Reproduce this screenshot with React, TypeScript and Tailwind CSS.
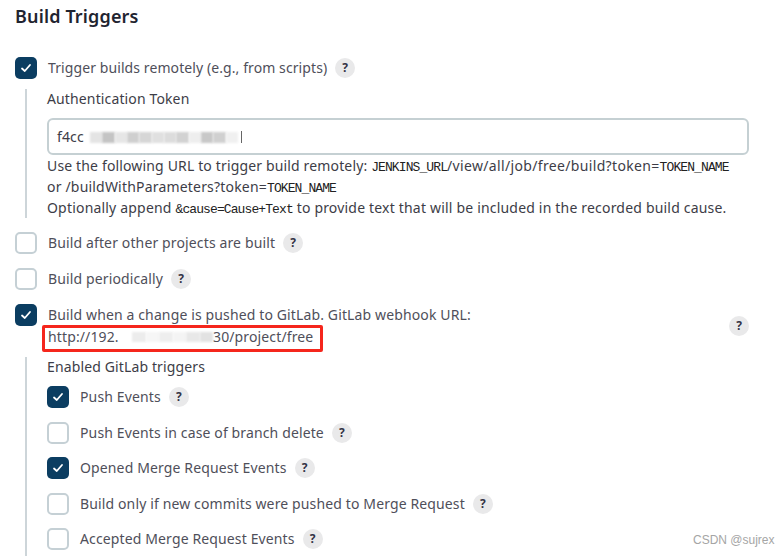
type RowProps = {
  label: string;
  checked?: boolean;
  className?: string;
};

function Checkbox({ checked }: { checked?: boolean }) {
  if (checked) {
    return (
      <span className="flex h-[22px] w-[22px] shrink-0 items-center justify-center rounded-[5px] bg-[#0b3d61]">
        <svg className="h-3.5 w-3.5" viewBox="0 0 14 14" fill="none" stroke="white" strokeWidth={1.8} strokeLinecap="round" strokeLinejoin="round">
          <path d="M3 7.5 5.8 10 11 4" />
        </svg>
      </span>
    );
  }
  return <span className="h-[22px] w-[22px] shrink-0 rounded-[5px] border-2 border-[#c5d0d5] bg-white" />;
}

function Help({ className = "" }: { className?: string }) {
  return (
    <span className={`flex h-5 w-5 shrink-0 items-center justify-center rounded-full bg-[#e9e9ea] text-[12px] font-bold leading-none tracking-normal text-[#333345] ${className}`}>
      ?
    </span>
  );
}

function Row({ label, checked, className = "" }: RowProps) {
  return (
    <div className={`flex h-[22px] items-center ${className}`}>
      <Checkbox checked={checked} />
      <span className="relative -top-px ml-[11px] whitespace-nowrap">{label}</span>
      <Help className="ml-2" />
    </div>
  );
}

function Code({ children }: { children: string }) {
  return <code className="font-['Liberation_Mono',monospace] text-[13px] leading-none tracking-[-0.9px] text-[#222]">{children}</code>;
}

// pixelated smear laid over the hidden part of a value
function Smear({ shades, className }: { shades: string[]; className: string }) {
  return (
    <div className={`absolute flex ${className}`}>
      {shades.map((shade, i) => (
        <span key={i} className={`h-full flex-1 blur-[1px] ${shade}`} />
      ))}
    </div>
  );
}

export default function App() {
  return (
    <div className="relative h-[556px] w-[783px] overflow-hidden bg-white pl-[15px] font-['Noto_Sans',sans-serif] text-[14px] leading-[21px] tracking-[0.13px] text-[#4f4f5a]">
      <h2 className="pt-[4px] text-[18px] font-semibold leading-6 tracking-[0.15px] text-[#1f2430]">Build Triggers</h2>

      <Row label="Trigger builds remotely (e.g., from scripts)" checked className="mt-[29px] tracking-[0.09px]" />

      <div className="ml-[10px] mt-2.5 h-[129px] border-l-2 border-[#cdd5d9] pl-[20px]">
        <div className="relative -top-px text-[#3d3d47]">Authentication Token</div>
        <div className="mt-[8px] flex h-[37px] w-[702px] items-center rounded-md border-2 border-[#c5d0d3] pl-2 text-[#3d3d47]">f4cc</div>
        <div className="whitespace-nowrap tracking-[0.19px] text-[#3d3d47]">
          <div>
            <span className="tracking-[0.15px]">Use the following URL to trigger build remotely: </span>
            <Code>JENKINS_URL</Code>
            <span className="tracking-[0.34px]">/view/all/job/free/build?token=</span>
            <Code>TOKEN_NAME</Code>
          </div>
          <div>
            or /buildWithParameters?token=<Code>TOKEN_NAME</Code>
          </div>
          <div>
            Optionally append <Code>&amp;cause=Cause+Text</Code> to provide text that will be included in the recorded build cause.
          </div>
        </div>
      </div>

      <Row label="Build after other projects are built" className="mt-[14px]" />
      <Row label="Build periodically" className="mt-[14px]" />

      <div className="mt-[14px] flex w-[734px]">
        <Checkbox checked />
        <div className="ml-[11px] whitespace-nowrap">
          <div>Build when a change is pushed to GitLab. GitLab webhook URL:</div>
          <div className="mt-px">http://192.</div>
        </div>
        <Help className="ml-auto mt-[12px]" />
      </div>

      <div className="ml-[10px] mt-[10px] h-[199px] border-l-2 border-[#cdd5d9] pl-[20px]">
        <div className="relative -top-px text-[#3d3d47]">Enabled GitLab triggers</div>
        <Row label="Push Events" checked className="mt-[8px]" />
        <Row label="Push Events in case of branch delete" className="mt-[14px]" />
        <Row label="Opened Merge Request Events" checked className="mt-[13px]" />
        <Row label="Build only if new commits were pushed to Merge Request" className="mt-[14px]" />
        <Row label="Accepted Merge Request Events" className="mt-[13px]" />
      </div>

      {/* blurred-out token and host */}
      <div className="absolute left-[86px] top-[128px] h-[18px] w-[6px] bg-white" />
      <Smear
        className="left-[90px] top-[132px] h-[11px] w-[148px]"
        shades={["bg-[#e4e4e4]", "bg-[#c4c4c4]", "bg-[#e6e6e6]", "bg-[#cfcfcf]", "bg-[#d6d6d6]", "bg-[#e0e0e0]", "bg-[#dcdcdc]", "bg-[#d2d2d2]", "bg-[#eeeeee]", "bg-[#c8c8c8]", "bg-[#d0d0d0]", "bg-[#f0f0f0]"]}
      />
      <div className="absolute left-[241px] top-[131px] h-[12px] w-px bg-[#666]" />
      <Smear
        className="left-[132px] top-[332px] h-[10px] w-[81px]"
        shades={["bg-[#ececec]", "bg-[#f6f6f6]", "bg-[#eeeeee]", "bg-[#f4f4f4]", "bg-[#e8e8e8]", "bg-[#e2e2e2]"]}
      />
      <span className="absolute left-[213px] top-[326px]">30/project/free</span>

      {/* red annotation box */}
      <div className="absolute left-[42px] top-[325px] h-[27px] w-[281px] rounded-[2px] border-[3px] border-[#f5261c]" />

      <span className="absolute left-[693px] top-[532px] font-['Liberation_Sans',sans-serif] text-[12px] leading-4 tracking-normal text-[#a5a5a5]">CSDN @sujrex</span>
    </div>
  );
}
